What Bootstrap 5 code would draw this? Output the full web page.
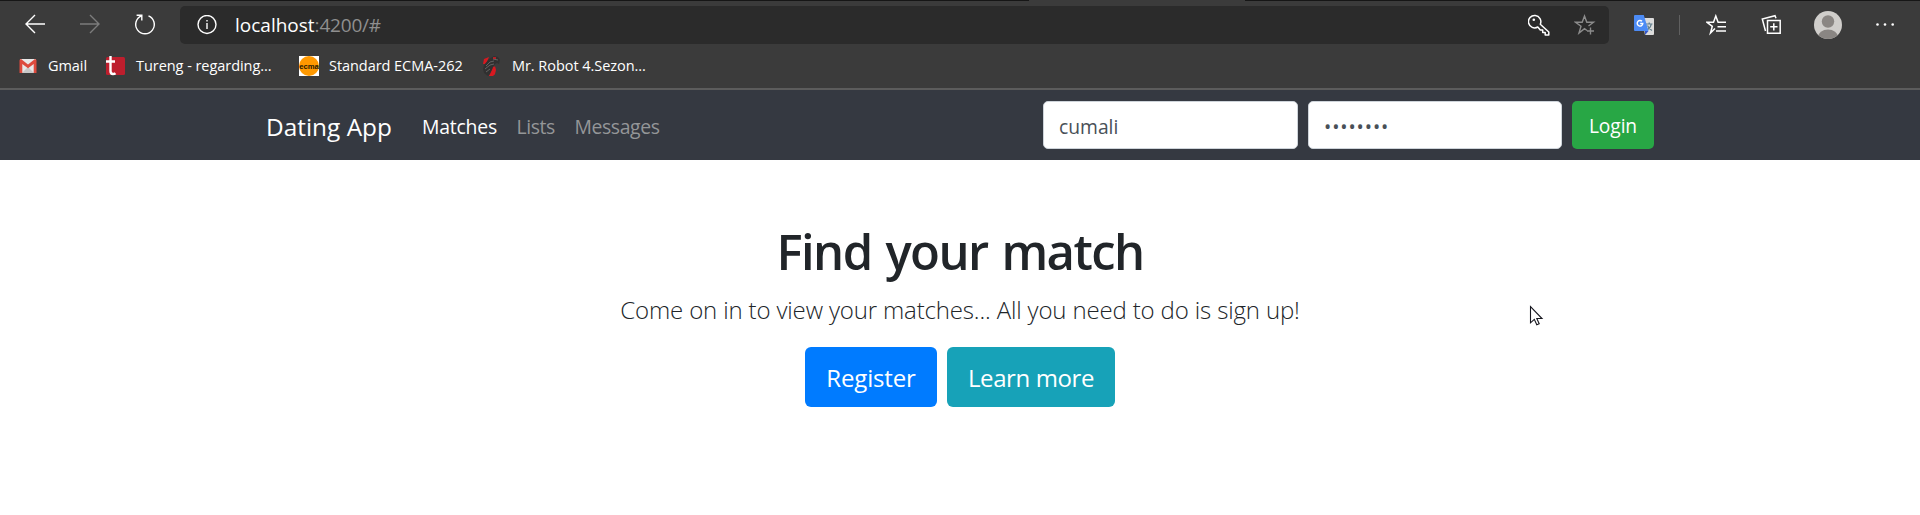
<!DOCTYPE html>
<html lang="en">
<head>
<meta charset="utf-8">
<title>Dating App</title>
<link href="https://cdn.jsdelivr.net/npm/bootstrap@5.3.0/dist/css/bootstrap.min.css" rel="stylesheet">
<style>
body{font-family:"Open Sans","Noto Sans",sans-serif;color:#212529;overflow:hidden;height:515px}
svg{display:block;flex:none}
.browser{background:#3b3b3b;height:90px;border-bottom:2px solid #5c5c5c}
.tabedge{height:1px;background:linear-gradient(90deg,#161616 1029px,#3b3b3b 1029px 1245px,#161616 1245px)}
.toolrow{height:48px;padding-left:23px}
.toolrow>.navicon{margin-right:31px}
.toolrow>.reload{margin-right:23px}
.address{width:1429px;height:38px;border-radius:5px;background:#2b2b2b;padding:0 13px 0 17px}
.url{font-size:19px;color:#8f8f8f;margin-left:18px;line-height:38px}
.url b{font-weight:400;color:#fff}
.url span{letter-spacing:-.2px}
.divider{width:1px;height:20px;background:#606060;margin:0 26px 0 25px}
.bookmarks{height:34px;padding-left:18px;color:#fff;font-size:14.5px}
.bookmarks a{display:flex;align-items:center;color:#fff;text-decoration:none;white-space:nowrap;flex:none;gap:10px;letter-spacing:-.05px}
.sitebar{background:#353941;height:70px}
.sitebar .container{width:1425px;max-width:1425px;padding:0 18.5px}
.brandname{font-size:24.4px;color:#fff;width:156px;line-height:36px;padding-top:3px}
.toplink{font-size:19.4px;color:#949698;margin-right:19.5px;line-height:30px;padding-top:3px;text-decoration:none;letter-spacing:-.4px}
.toplink.active{color:#fff;letter-spacing:-.2px}
.field{width:255px;height:48px;border:1px solid #ced4da;border-radius:5px;font-size:19.3px;color:#495057;padding:6px 15px 3px;margin-right:10px}
.secret{width:254px;letter-spacing:.9px}
.btn-login{width:82px;height:48px;background:#28a745;color:#fff;border:0;border-radius:5px;padding:3px 0 0;font-size:19.2px;letter-spacing:-.1px}
.hero{padding-top:61px}
.hero h1{font-size:49px;font-weight:600;line-height:60px;letter-spacing:-1.6px;word-spacing:2.800px;margin-bottom:10px}
.intro{font-size:24px;font-weight:300;line-height:38px;white-space:nowrap;letter-spacing:-.15px;margin-bottom:18px}
.btn-hero,.btn-hero:hover{height:60px;border:0;border-radius:6px;font-size:24px;color:#fff;padding:2px 0 0}
.btn-register{width:132px;background:#007bff;letter-spacing:-.15px}
.btn-learn{width:168px;background:#17a2b8;letter-spacing:-.4px}
.pointer{position:absolute;left:1529px;top:305px}
</style>
<script src="https://cdn.jsdelivr.net/npm/bootstrap@5.3.0/dist/js/bootstrap.bundle.min.js"></script>
</head>
<body>
<header class="browser">
  <div class="tabedge"></div>
  <div class="toolrow d-flex align-items-center">
    <svg class="navicon" width="24" height="24" fill="none" stroke="#fff" stroke-width="1.4"><path d="M22 11H3M12 2 3 11l9 9"/></svg>
    <svg class="navicon" width="24" height="24" fill="none" stroke="#7c7c7c" stroke-width="1.4"><path d="M2 11h19M12 2l9 9-9 9"/></svg>
    <svg class="reload" width="24" height="24" fill="none" stroke="#fff" stroke-width="1.4"><path d="M15.500 2.800A9.300 9.300 0 1 1 8.500 2.800M3.600 2.300h5.200v5.200"/></svg>
    <div class="address d-flex align-items-center">
      <svg width="20" height="20" fill="none" stroke="#fff" stroke-width="1.4"><circle cx="10" cy="9.500" r="9"/><path d="M10 8v6M10 5v1.600"/></svg>
      <div class="url"><b>localhost</b><span>:4200/#</span></div>
      <svg class="ms-auto" width="22" height="22" fill="none" stroke="#fff" stroke-width="1.5" stroke-linejoin="round"><path d="M12.300 10.200 20.800 18v3h-3.600v-2.500h-2.500V16h-2.400l-2.500-3A6.200 6.200 0 1 1 12.300 10.200Z"/><circle cx="5.800" cy="5.800" r="1.300" fill="#fff" stroke="none"/></svg>
      <svg style="margin-left:24px" width="22" height="22" fill="none" stroke="#8c8c8c" stroke-width="1.4"><path d="M13 16.500 10.500 14.700 5 19l2-6.700L1.500 8.200h6.700L10.500 2l2.300 6.200h6.700L14.500 12M16.500 13.500v7M13 17h7"/></svg>
    </div>
    <svg style="margin-left:25px" width="20" height="20"><path fill="#dcdcdc" d="M8 3h11a1 1 0 0 1 1 1v15a1 1 0 0 1-1 1h-8z"/><path fill="none" stroke="#607d8b" stroke-width="1.2" d="M12 9h6.500M15.200 7.500V9M17.300 9c-.5 3-2.500 5-4.300 6M13.500 10.500c1 2.200 2.500 4 4.500 5"/><path fill="#3457c9" d="M11 16h3.500L11 20z"/><path fill="#4c8bf5" d="M1 0h8.800l4.700 16H1a1 1 0 0 1-1-1V1a1 1 0 0 1 1-1z"/><path fill="none" stroke="#fff" stroke-width="1.400" d="M8 6.300A2.800 2.800 0 1 0 8.800 8.500H6.200"/></svg>
    <div class="divider"></div>
    <svg width="22" height="22" fill="none" stroke="#fff" stroke-width="1.500"><path d="M9 14.500 4.500 19l1.800-6.700L1 8.300h6.500L9.800 2l2.300 6.300H20M11.500 12.700H20M10 17H20"/></svg>
    <svg style="margin-left:33px" width="22" height="22" fill="none" stroke="#fff" stroke-width="1.500"><path d="M6.500 6.500h12.700v12.700H6.500zM12.800 9.200v7.300M9.200 12.800h7.300M4.500 17 1.300 5l12.700-3.300 1 2.500"/></svg>
    <svg style="margin-left:31px" width="28" height="28"><defs><clipPath id="face"><circle cx="14" cy="14" r="14"/></clipPath></defs><g clip-path="url(#face)"><path fill="#d0cecb" d="M0 0h28v28H0z"/><circle cx="14" cy="10.500" r="6.200" fill="#8a8683"/><ellipse cx="14" cy="26" rx="10" ry="7.500" fill="#8a8683"/></g></svg>
    <svg style="margin-left:33px" width="22" height="6" fill="#fff"><circle cx="2.500" cy="2.500" r="1.300"/><circle cx="10" cy="2.500" r="1.300"/><circle cx="17.700" cy="2.500" r="1.300"/></svg>
  </div>
  <div class="bookmarks d-flex align-items-center">
    <a style="width:88px"><svg width="20" height="20"><path fill="#e8e8e8" d="M2 3h16v14H2z"/><path fill="#c8c8c8" d="M4 17l6-6 6 6z"/><path fill="#dd4b3e" d="M1.500 4.500Q1.500 3 3 3l7 5.500L17 3q1.500 0 1.500 1.500V17H15.700V8L10 12.300 4.300 8v9H1.500z"/></svg>Gmail</a>
    <a style="width:193px"><svg width="20" height="20"><rect x="0" y="1" width="19" height="18" rx="1.500" fill="#be1e2d"/><path fill="none" stroke="#fff" stroke-width="2.400" d="M4.500 0v15q0 3 2.500 3 1.500 0 2.500-.8M0 5.500h9"/></svg>Tureng - regarding...</a>
    <a style="width:183px"><svg width="20" height="20"><path fill="#fff" d="M0 0h20v20H0z"/><circle cx="10" cy="10" r="10" fill="#ff9900"/><text x="10" y="12.500" text-anchor="middle" textLength="19.500" lengthAdjust="spacingAndGlyphs" font-family="Liberation Sans" font-size="8" font-weight="700" fill="#241800">ecma</text></svg>Standard ECMA-262</a>
    <a><svg width="20" height="20"><path fill="#d71920" d="M9 10l4 1v7l-2 2H7zM2 3l5-2-3 7H1z"/><path fill="#303030" d="M2 9l5-6 5-3 4 1 2 3-1 4-2-1-2 1-2 3-2 7-3 2-4-3-1-4z"/><path fill="none" stroke="#707070" stroke-width=".8" d="M4 10l4-4 4-1M3 13l5-4 4-1M4 16l4-3M11 3l5 1"/><path fill="#d71920" d="M13 10l1 4-1 4-3 2H7l3-6z"/><path stroke="#e51c23" stroke-width="1.400" d="M11 2h3"/></svg>Mr. Robot 4.Sezon...</a>
  </div>
</header>
<nav class="sitebar d-flex">
  <div class="container d-flex align-items-center">
    <div class="brandname">Dating App</div>
    <a class="toplink active">Matches</a><a class="toplink">Lists</a><a class="toplink">Messages</a>
    <form class="d-flex ms-auto"><input class="field" value="cumali"><input class="field secret" value="••••••••"><button type="button" class="btn btn-login">Login</button></form>
  </div>
</nav>
<main class="hero text-center">
  <h1>Find your match</h1>
  <p class="intro">Come on in to view your matches... All you need to do is sign up!</p>
  <div class="d-flex justify-content-center" style="gap:10px"><button class="btn btn-hero btn-register">Register</button><button class="btn btn-hero btn-learn">Learn more</button></div>
</main>
<svg class="pointer" width="16" height="22"><path d="M1.500 1.500v16.300l3.800-3.500 2.500 5.500 2.400-1-2.400-5.300h5.200z" fill="#fff" stroke="#16161e" stroke-width="1.100"/></svg>
</body>
</html>
